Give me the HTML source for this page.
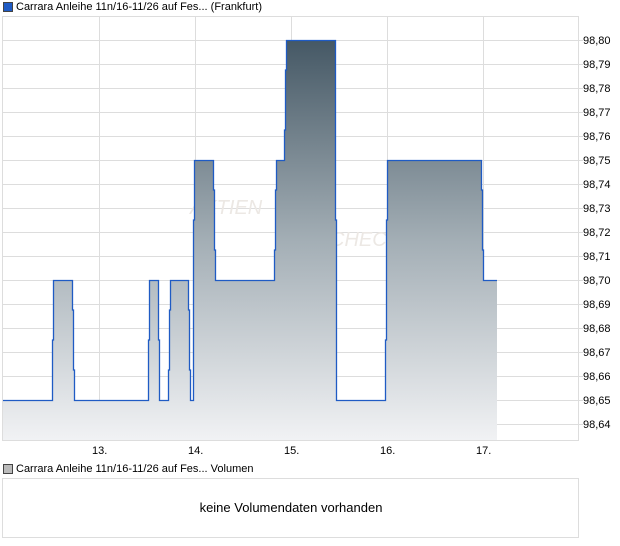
<!DOCTYPE html><html><head><style>
body{margin:0;width:620px;height:546px;background:#fff;font-family:"Liberation Sans",sans-serif;font-size:11px;color:#000;position:relative;overflow:hidden}
.t{position:absolute;white-space:nowrap}
</style></head><body>
<div class="t" style="left:3px;top:2px;width:8px;height:8px;background:#1f5bc4;border:1px solid #444"></div>
<div class="t" style="left:16px;top:1px">Carrara Anleihe 11n/16-11/26 auf Fes... (Frankfurt)</div>
<svg class="t" style="left:0;top:0" width="620" height="546">
<defs><linearGradient id="g" x1="0" y1="40" x2="0" y2="440" gradientUnits="userSpaceOnUse"><stop offset="0" stop-color="#455865"/><stop offset="0.5" stop-color="#a3aeb5"/><stop offset="1" stop-color="#f1f2f4"/></linearGradient></defs>
<rect x="2.5" y="16.5" width="576" height="424" fill="#fff" stroke="#ddd"/>
<g stroke="#ddd">
<path d="M3 40.5H578M3 64.5H578M3 88.5H578M3 112.5H578M3 136.5H578M3 160.5H578M3 184.5H578M3 208.5H578M3 232.5H578M3 256.5H578M3 280.5H578M3 304.5H578M3 328.5H578M3 352.5H578M3 376.5H578M3 400.5H578M3 424.5H578"/>
<path d="M99.5 17V440M195.5 17V440M291.5 17V440M387.5 17V440M483.5 17V440"/>
<path d="M578 40.5H583M578 64.5H583M578 88.5H583M578 112.5H583M578 136.5H583M578 160.5H583M578 184.5H583M578 208.5H583M578 232.5H583M578 256.5H583M578 280.5H583M578 304.5H583M578 328.5H583M578 352.5H583M578 376.5H583M578 400.5H583M578 424.5H583"/>
</g>
<text x="190" y="214" font-size="20" font-style="italic" fill="#ece8e4" font-family="Liberation Sans">AKTIEN</text>
<text x="330" y="246" font-size="20" font-style="italic" fill="#ece8e4" font-family="Liberation Sans">CHECK</text>
<path d="M3 400H52V340H53V280H72V310H73V370H74V400H148V340H149V280H158V340H159V400H168V370H169V310H170V280H188V310H189V370H190V400H193V220H194V160H213V190H214V250H215V280H274V250H275V190H276V160H284V130H285V70H286V40H335V220H336V400H385V340H386V220H387V160H481V190H482V250H483V280H497V440H3Z" fill="url(#g)"/>
<path d="M3 400.5H52.5V340H53.5V280.5H72.5V310H73.5V370H74.5V400.5H148.5V340H149.5V280.5H158.5V340H159.5V400.5H168.5V370H169.5V310H170.5V280.5H188.5V310H189.5V370H190.5V400.5H193.5V220H194.5V160.5H213.5V190H214.5V250H215.5V280.5H274.5V250H275.5V190H276.5V160.5H284.5V130H285.5V70H286.5V40.5H335.5V220H336.5V400.5H385.5V340H386.5V220H387.5V160.5H481.5V190H482.5V250H483.5V280.5H497" fill="none" stroke="#1f5bc4" stroke-width="1.3"/>
<rect x="2.5" y="478.5" width="576" height="59" fill="#fff" stroke="#ddd"/>
</svg>
<div class="t" style="left:583px;top:35px">98,80</div>
<div class="t" style="left:583px;top:59px">98,79</div>
<div class="t" style="left:583px;top:83px">98,78</div>
<div class="t" style="left:583px;top:107px">98,77</div>
<div class="t" style="left:583px;top:131px">98,76</div>
<div class="t" style="left:583px;top:155px">98,75</div>
<div class="t" style="left:583px;top:179px">98,74</div>
<div class="t" style="left:583px;top:203px">98,73</div>
<div class="t" style="left:583px;top:227px">98,72</div>
<div class="t" style="left:583px;top:251px">98,71</div>
<div class="t" style="left:583px;top:275px">98,70</div>
<div class="t" style="left:583px;top:299px">98,69</div>
<div class="t" style="left:583px;top:323px">98,68</div>
<div class="t" style="left:583px;top:347px">98,67</div>
<div class="t" style="left:583px;top:371px">98,66</div>
<div class="t" style="left:583px;top:395px">98,65</div>
<div class="t" style="left:583px;top:419px">98,64</div>
<div class="t" style="left:92px;top:445px">13.</div>
<div class="t" style="left:188px;top:445px">14.</div>
<div class="t" style="left:284px;top:445px">15.</div>
<div class="t" style="left:380px;top:445px">16.</div>
<div class="t" style="left:476px;top:445px">17.</div>
<div class="t" style="left:3px;top:464px;width:8px;height:8px;background:#bbb;border:1px solid #444"></div>
<div class="t" style="left:16px;top:463px">Carrara Anleihe 11n/16-11/26 auf Fes... Volumen</div>
<div class="t" style="left:3px;top:500px;width:576px;text-align:center;font-size:13px">keine Volumendaten vorhanden</div>
</body></html>
